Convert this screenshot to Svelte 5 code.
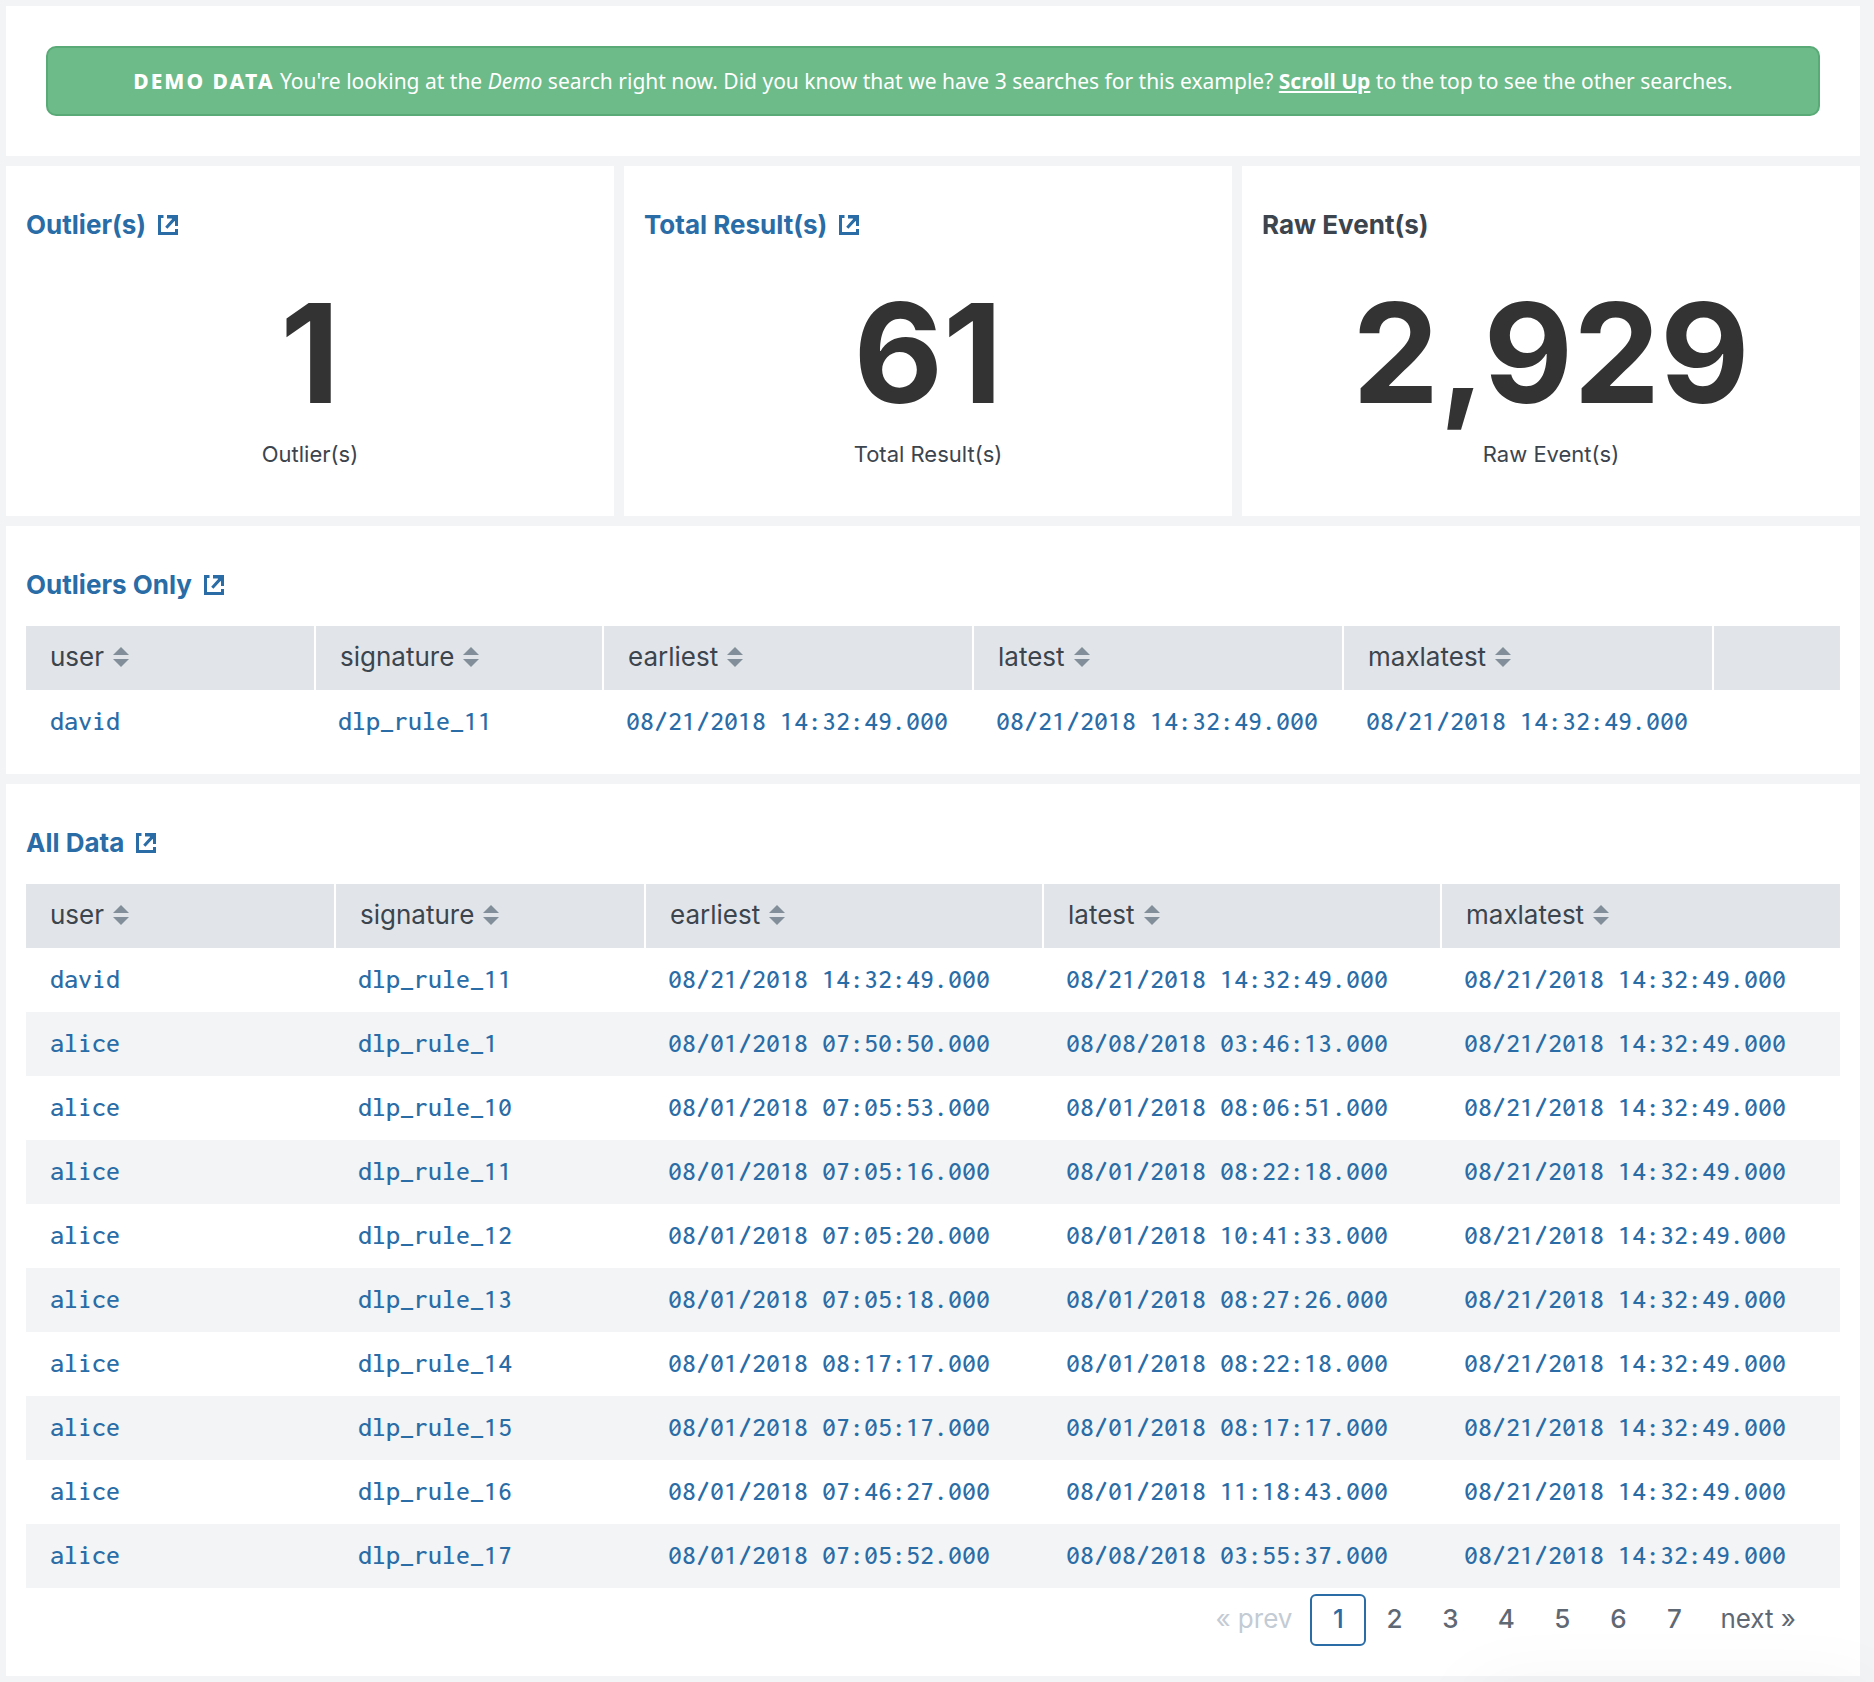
<script lang="ts">
  const stats = [
    { title: 'Outlier(s)', value: '1', linked: true },
    { title: 'Total Result(s)', value: '61', linked: true },
    { title: 'Raw Event(s)', value: '2,929', linked: false }
  ];

  const fields = ['user', 'signature', 'earliest', 'latest', 'maxlatest'];
  const max = '08/21/2018 14:32:49.000';

  const tables = [
    {
      title: 'Outliers Only',
      columns: [...fields, ''],
      weights: [288, 288, 370, 370, 370, 128],
      rows: [['david', 'dlp_rule_11', max, max, max, '']],
      paged: false
    },
    {
      title: 'All Data',
      columns: fields,
      weights: [308, 310, 398, 398, 400],
      rows: [
        ['david', 'dlp_rule_11', max, max, max],
        ['alice', 'dlp_rule_1', '08/01/2018 07:50:50.000', '08/08/2018 03:46:13.000', max],
        ['alice', 'dlp_rule_10', '08/01/2018 07:05:53.000', '08/01/2018 08:06:51.000', max],
        ['alice', 'dlp_rule_11', '08/01/2018 07:05:16.000', '08/01/2018 08:22:18.000', max],
        ['alice', 'dlp_rule_12', '08/01/2018 07:05:20.000', '08/01/2018 10:41:33.000', max],
        ['alice', 'dlp_rule_13', '08/01/2018 07:05:18.000', '08/01/2018 08:27:26.000', max],
        ['alice', 'dlp_rule_14', '08/01/2018 08:17:17.000', '08/01/2018 08:22:18.000', max],
        ['alice', 'dlp_rule_15', '08/01/2018 07:05:17.000', '08/01/2018 08:17:17.000', max],
        ['alice', 'dlp_rule_16', '08/01/2018 07:46:27.000', '08/01/2018 11:18:43.000', max],
        ['alice', 'dlp_rule_17', '08/01/2018 07:05:52.000', '08/08/2018 03:55:37.000', max]
      ],
      paged: true
    }
  ];

  const share = (weights: number[], i: number) =>
    `${(100 * weights[i]) / weights.reduce((a, b) => a + b, 0)}%`;
</script>

{#snippet heading(title: string, linked: boolean)}
  <h2 class="heading">
    {#if linked}
      <a href="#open">
        {title}
        <svg class="open-icon" viewBox="0 0 20 20" aria-hidden="true">
          <path d="M0 0H5.5V3H3V17H17V14H20V20H0Z" />
          <path d="M9 0H20V11H17V5.4L9.4 13.8L7.2 11.8L14.6 3.4H9Z" />
          <path d="M12.5 2H18V7.5Z" />
        </svg>
      </a>
    {:else}
      {title}
    {/if}
  </h2>
{/snippet}

<main class="dashboard">
  <section class="panel banner-panel">
    <p class="banner">
      <strong class="tag">DEMO DATA</strong> You're looking at the <em>Demo</em> search right now. Did you know
      that we have 3 searches for this example? <a href="#top">Scroll Up</a> to the top to see the other searches.
    </p>
  </section>

  <div class="stats">
    {#each stats as stat}
      <section class="panel">
        {@render heading(stat.title, stat.linked)}
        <div class="value">{stat.value}</div>
        <div class="caption">{stat.title}</div>
      </section>
    {/each}
  </div>

  {#each tables as table}
    <section class="panel">
      {@render heading(table.title, true)}
      <table>
        <colgroup>
          {#each table.weights as _, i}
            <col style:width={share(table.weights, i)} />
          {/each}
        </colgroup>
        <thead>
          <tr>
            {#each table.columns as name}
              <th scope="col">
                {#if name}
                  <button type="button" class="sort">
                    {name}
                    <svg class="sort-icon" viewBox="0 0 16 20" aria-hidden="true">
                      <path d="M8 0L16 8H0ZM0 12H16L8 20Z" />
                    </svg>
                  </button>
                {/if}
              </th>
            {/each}
          </tr>
        </thead>
        <tbody>
          {#each table.rows as row}
            <tr>
              {#each row as cell}
                <td>{#if cell}<a href="#drilldown">{cell}</a>{/if}</td>
              {/each}
            </tr>
          {/each}
        </tbody>
      </table>
      {#if table.paged}
        <nav class="pager" aria-label="Pages">
          <button type="button" class="page step" disabled>« prev</button>
          {#each [1, 2, 3, 4, 5, 6, 7] as n}
            <button type="button" class="page" class:current={n === 1} aria-current={n === 1 ? 'page' : undefined}>{n}</button>
          {/each}
          <button type="button" class="page step">next »</button>
        </nav>
      {/if}
    </section>
  {/each}
</main>
<div class="corner-shade"></div>

<style>
  :global(body) {
    background: #f2f4f6;
    overflow-x: hidden;
  }

  .dashboard {
    display: flex;
    flex-direction: column;
    gap: 10px;
    padding: 6px 14px 6px 6px;
    color: #3c444d;
    font-family: Inter, "Liberation Sans", sans-serif;
  }

  .panel {
    padding: 0 20px 20px;
    background: #fff;
  }

  .banner-panel {
    padding: 40px;
  }

  .banner {
    margin: 0;
    padding: 17px 20px;
    border: 2px solid #5aaa77;
    border-radius: 10px;
    background: #6cbb89;
    color: #fff;
    font: 21px/32px "Noto Sans", "DejaVu Sans", sans-serif;
    text-align: center;
  }

  .banner a {
    color: #fff;
    font-weight: bold;
  }

  .tag {
    font-weight: 800;
    letter-spacing: 2px;
  }

  .stats {
    display: grid;
    grid-template-columns: 608fr 608fr 618fr;
    gap: 10px;
  }

  .stats .panel {
    padding-bottom: 46px;
  }

  .heading {
    margin: 0;
    padding: 39px 0 21px;
    font-size: 26px;
    line-height: 40px;
    font-weight: 700;
  }

  .heading a {
    display: inline-flex;
    align-items: center;
    gap: 12px;
  }

  a {
    color: #296ca6;
    text-decoration: none;
  }

  .banner a {
    text-decoration: underline;
  }

  .open-icon {
    width: 20px;
    height: 20px;
    fill: #296ca6;
  }

  .value {
    padding: 18px 0 16px;
    color: #333;
    font-size: 138px;
    line-height: 138px;
    font-weight: 700;
    text-align: center;
  }

  .caption {
    font-size: 22px;
    line-height: 32px;
    text-align: center;
  }

  table {
    width: 100%;
    border-collapse: separate;
    border-spacing: 0;
    table-layout: fixed;
  }

  th,
  td {
    box-sizing: border-box;
    height: 64px;
    padding: 0 24px 2px;
  }

  th {
    background: #e1e4e9;
    text-align: left;
  }

  th + th {
    border-left: 2px solid #fff;
  }

  td {
    font: 500 28px/32px Inconsolata, "Noto Sans Mono CJK SC", monospace;
    white-space: nowrap;
  }

  tbody tr:nth-child(even) {
    background: #f2f4f5;
  }

  button {
    padding: 0;
    border: 0;
    background: none;
    color: inherit;
    font-family: inherit;
    font-size: 26px;
    line-height: 32px;
    cursor: pointer;
  }

  .sort {
    display: flex;
    align-items: center;
    gap: 9px;
  }

  .sort-icon {
    width: 16px;
    height: 20px;
    fill: #828e99;
  }

  .pager {
    display: flex;
    justify-content: flex-end;
    padding: 6px 26px 10px 0;
  }

  .page {
    min-width: 56px;
    height: 52px;
    padding-bottom: 2px;
    border: 2px solid transparent;
    border-radius: 6px;
    color: #5f6873;
    font-weight: 500;
  }

  .step {
    padding: 0 16px 2px;
    font-weight: 400;
  }

  .page:disabled {
    color: #c3cbd4;
    cursor: default;
  }

  .current {
    border-color: #296ca6;
    color: #296ca6;
  }

  .corner-shade {
    position: fixed;
    right: 0;
    bottom: -60px;
    width: 400px;
    height: 50px;
    box-shadow: 0 0 80px rgba(0, 0, 0, 0.06);
    pointer-events: none;
  }
</style>
